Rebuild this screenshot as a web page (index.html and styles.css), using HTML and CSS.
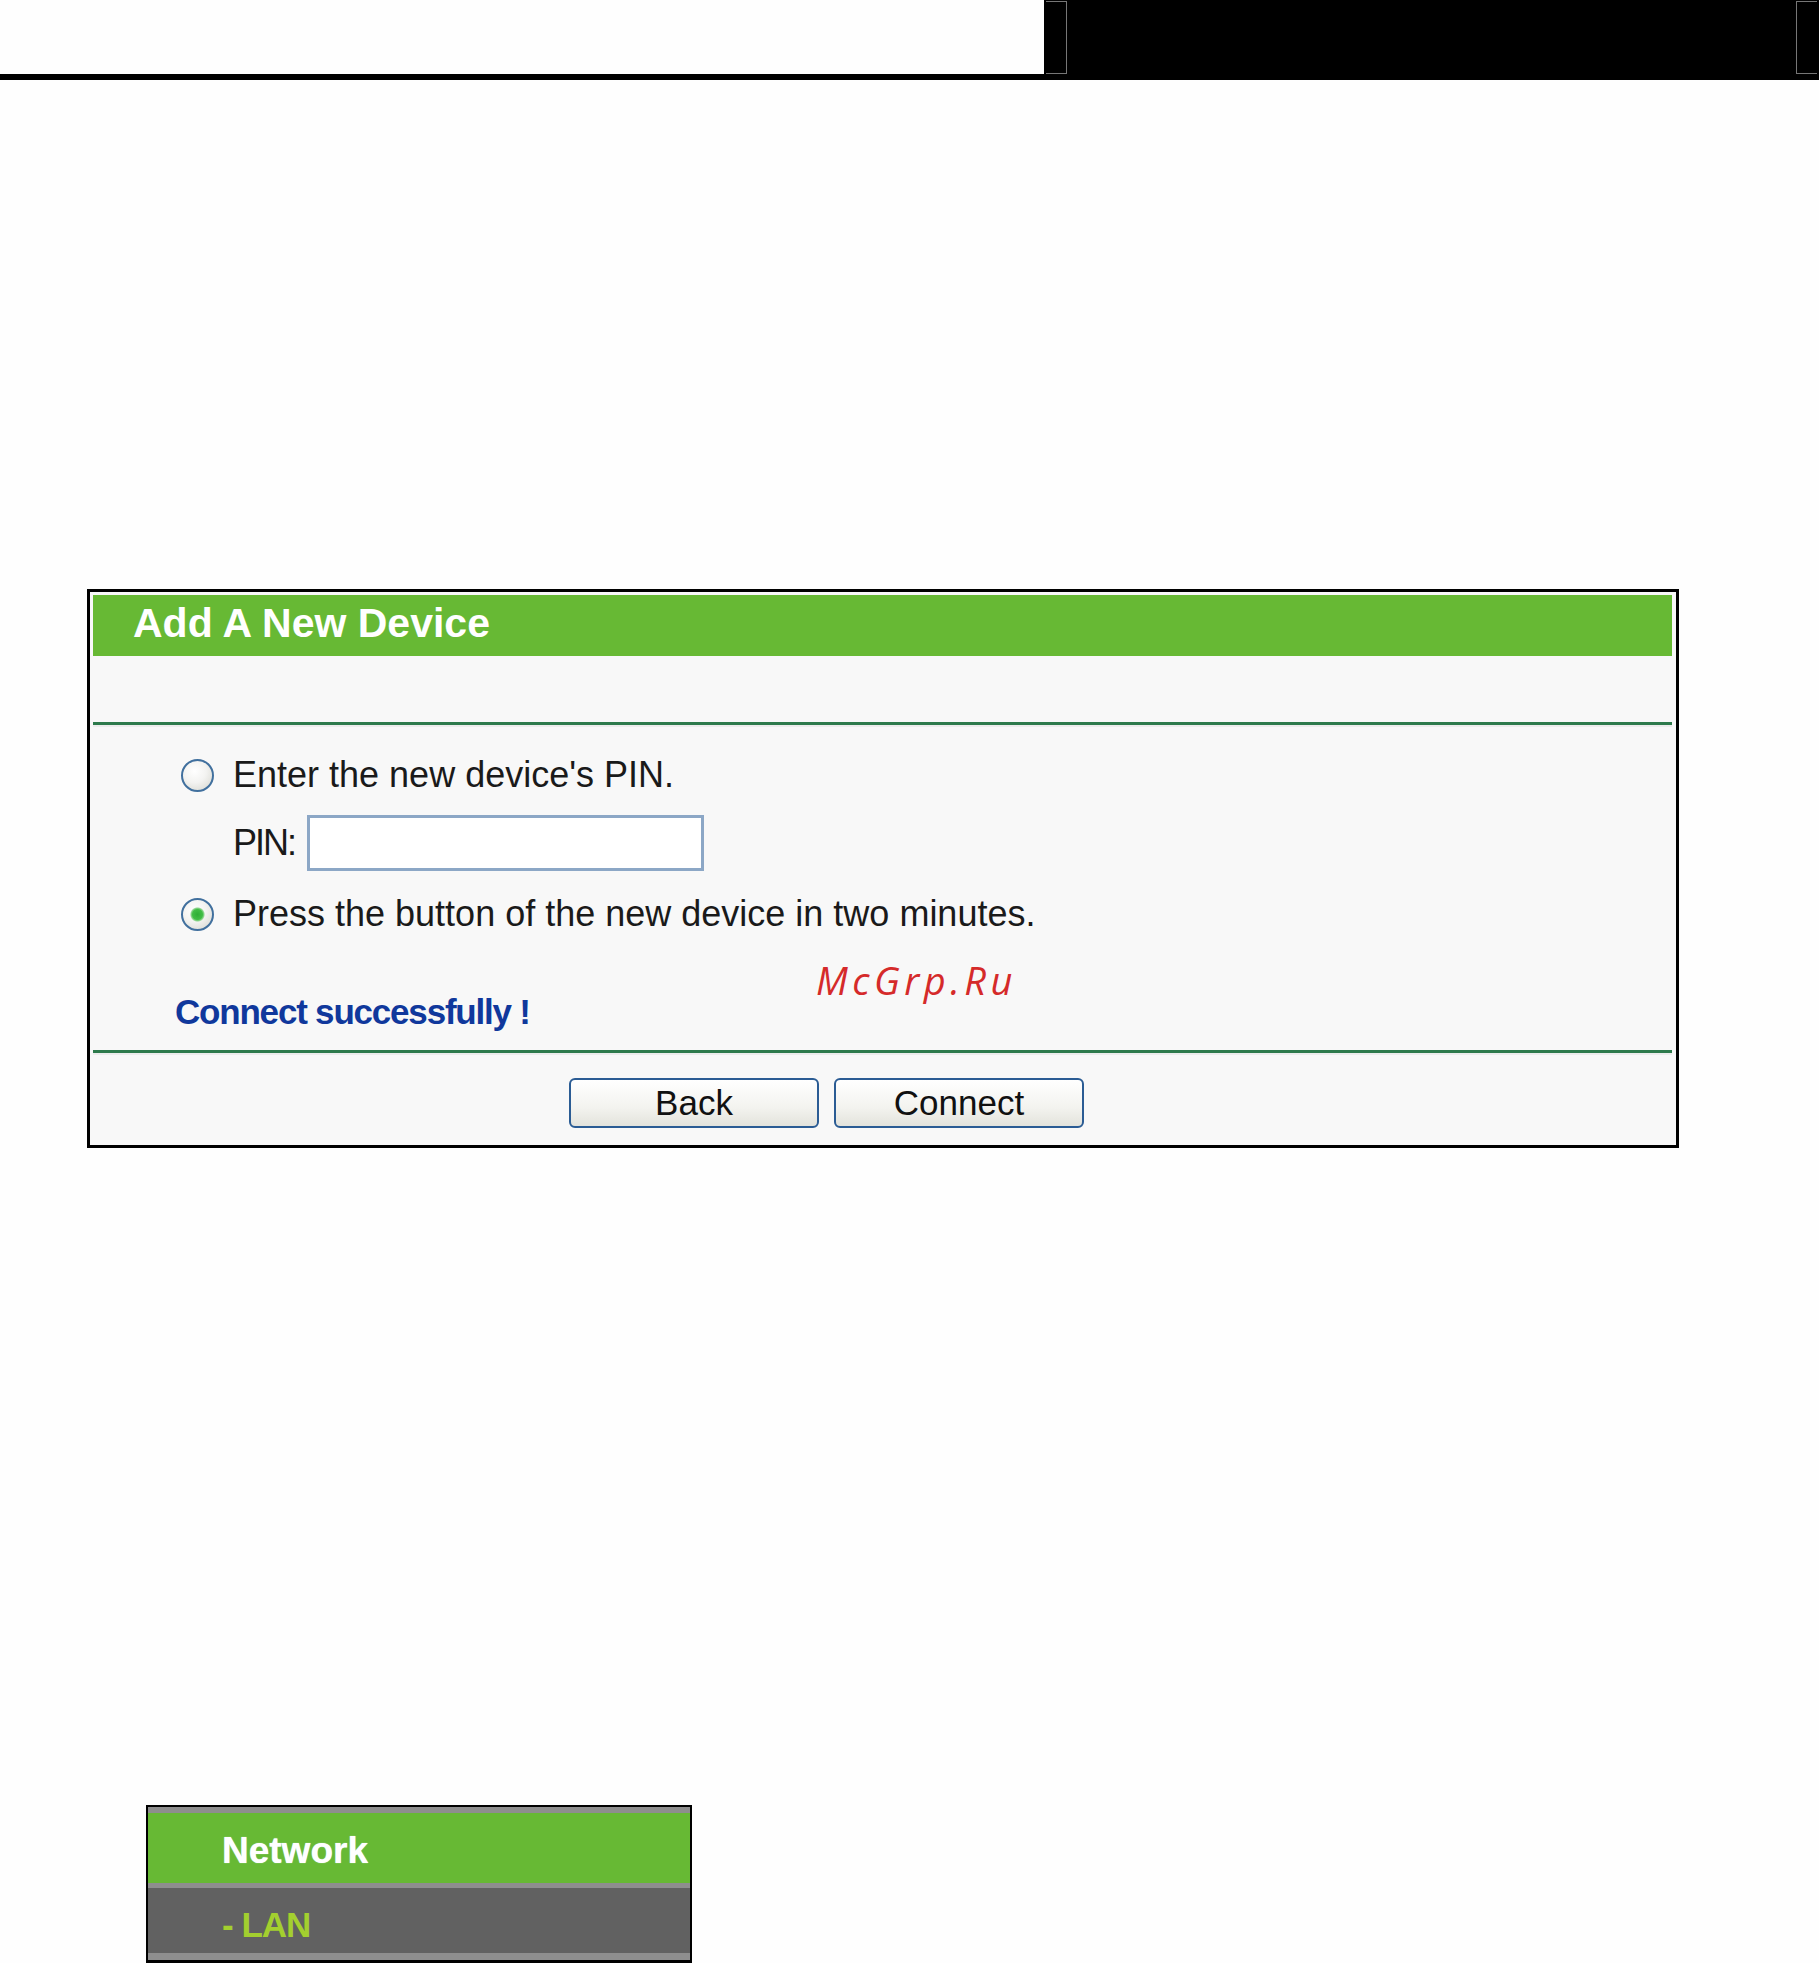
FILE: index.html
```html
<!DOCTYPE html>
<html>
<head>
    <title>Add A New Device</title>
    <link rel="stylesheet" href="styles.css">
</head>
<body>
    <div class="topbar">
        <div class="topbar-blank"></div>
        <div class="topbar-dark">
            <span class="bracket bracket-left"></span>
            <span class="bracket bracket-right"></span>
        </div>
    </div>

    <form class="panel" id="wpsForm">
        <div class="panel-title">Add A New Device</div>
        <div class="divider"></div>

        <div class="options">
            <label class="option">
                <input type="radio" name="mode" value="pin" class="radio">
                <span>Enter the new device's PIN.</span>
            </label>
            <div class="pin-row">
                <span class="pin-label">PIN:</span>
                <input type="text" class="pin-input" maxlength="8">
            </div>
            <label class="option option-push">
                <input type="radio" name="mode" value="pbc" class="radio" checked>
                <span>Press the button of the new device in two minutes.</span>
            </label>
        </div>

        <div class="message">Connect successfully !</div>
        <div class="watermark">McGrp.Ru</div>

        <div class="divider divider-bottom"></div>
        <div class="buttons">
            <button type="button" class="btn">Back</button>
            <button type="button" class="btn">Connect</button>
        </div>
    </form>

    <div class="menu">
        <div class="menu-item">Network</div>
        <div class="menu-item menu-sub">- LAN</div>
    </div>
</body>
</html>
```

FILE: styles.css
```css
/* Pagina */
body {
    margin: 0;
    background-color: #fefefe;
    font-family: "Liberation Sans", Arial, sans-serif;
    color: #1a1a1a;
}

/* Barra superior */
.topbar {
    display: flex;
    height: 80px;
}

.topbar-blank {
    width: 1044px;
    height: 80px;
    box-sizing: border-box;
    border-bottom: 6px solid #000;
    background-color: #fefefe;
}

.topbar-dark {
    flex: 1;
    display: flex;
    justify-content: space-between;
    padding: 1px 2px 6px 2px;
    background-color: #000;
}

.bracket {
    width: 21px;
    height: 73px;
    box-sizing: border-box;
    border: 1px solid #767676;
}

.bracket-left {
    border-left: none;
}

.bracket-right {
    border-right: none;
}

/* Panel principal */
.panel {
    position: relative;
    width: 1592px;
    box-sizing: border-box;
    margin: 509px 0 0 87px;
    padding: 3px 4px 3px 3px;
    border: 3px solid #000;
    background-color: #f8f8f8;
}

.panel-title {
    height: 61px;
    box-sizing: border-box;
    padding-left: 40px;
    background-color: #67b934;
    color: #fff;
    font-size: 41px;
    font-weight: bold;
    line-height: 56px;
}

.divider {
    margin-top: 66px;
    height: 3px;
    background-color: #2d7a4c;
    border-bottom: 2px solid #ececec;
}

.divider-bottom {
    margin-top: 14px;
}

/* Opciones */
.options {
    padding: 23px 0 0 88px;
    font-size: 36px;
    line-height: 1;
}

.option {
    display: flex;
    align-items: center;
    gap: 19px;
    height: 50px;
}

.option-push {
    margin-top: 18px;
}

.radio {
    appearance: none;
    -webkit-appearance: none;
    margin: 0;
    width: 33px;
    height: 33px;
    box-sizing: border-box;
    border: 2px solid #41709e;
    border-radius: 50%;
    background: radial-gradient(circle at 40% 35%, #ffffff 0, #f3f3f1 45%, #d4d4cc 100%);
}

.radio:checked {
    background:
        radial-gradient(circle, #2fae36 0, #41bd45 5px, #8fd68f 6.5px, transparent 7.5px),
        radial-gradient(circle at 40% 35%, #ffffff 0, #f3f3f1 45%, #d4d4cc 100%);
}

.pin-row {
    display: flex;
    align-items: center;
    height: 56px;
    margin-top: 15px;
    padding-left: 52px;
}

.pin-label {
    width: 74px;
    letter-spacing: -2px;
}

.pin-input {
    width: 397px;
    height: 56px;
    box-sizing: border-box;
    border: 3px solid #8ca7c6;
    background-color: #fff;
    font-size: 30px;
}

/* Mensaje de estado */
.message {
    display: flex;
    align-items: center;
    height: 50px;
    margin-top: 47px;
    padding-left: 82px;
    color: #10389c;
    font-size: 35px;
    font-weight: bold;
    letter-spacing: -1.2px;
    line-height: 1;
}

.watermark {
    position: absolute;
    left: 726px;
    top: 369px;
    color: #d52a2a;
    font-family: "Open Sans", sans-serif;
    font-size: 38px;
    font-style: italic;
    letter-spacing: 4.5px;
    line-height: 1;
}

/* Botones */
.buttons {
    display: flex;
    gap: 15px;
    padding: 23px 0 14px 476px;
}

.btn {
    width: 250px;
    height: 50px;
    border: 2px solid #2b5c94;
    border-radius: 6px;
    background: linear-gradient(#ffffff, #f3f3ef 60%, #e3e3dc);
    color: #111;
    font-family: "Liberation Sans", Arial, sans-serif;
    font-size: 35px;
    cursor: pointer;
}

/* Menu lateral */
.menu {
    width: 546px;
    box-sizing: border-box;
    margin: 657px 0 0 146px;
    border: 2px solid #000;
    border-bottom-width: 3px;
}

.menu-item {
    display: flex;
    align-items: center;
    height: 65px;
    padding: 5px 0 0 74px;
    border-top: 6px solid #8e8e8e;
    background-color: #67b934;
    color: #fff;
    font-size: 37px;
    font-weight: bold;
    text-shadow: 0 0 1px #d8f4ff;
}

.menu-sub {
    height: 57px;
    padding-top: 8px;
    border-top-width: 5px;
    border-bottom: 7px solid #8e8e8e;
    background-color: #616161;
    color: #a3cf2f;
    font-size: 35px;
    letter-spacing: -1px;
    text-shadow: none;
}
```
